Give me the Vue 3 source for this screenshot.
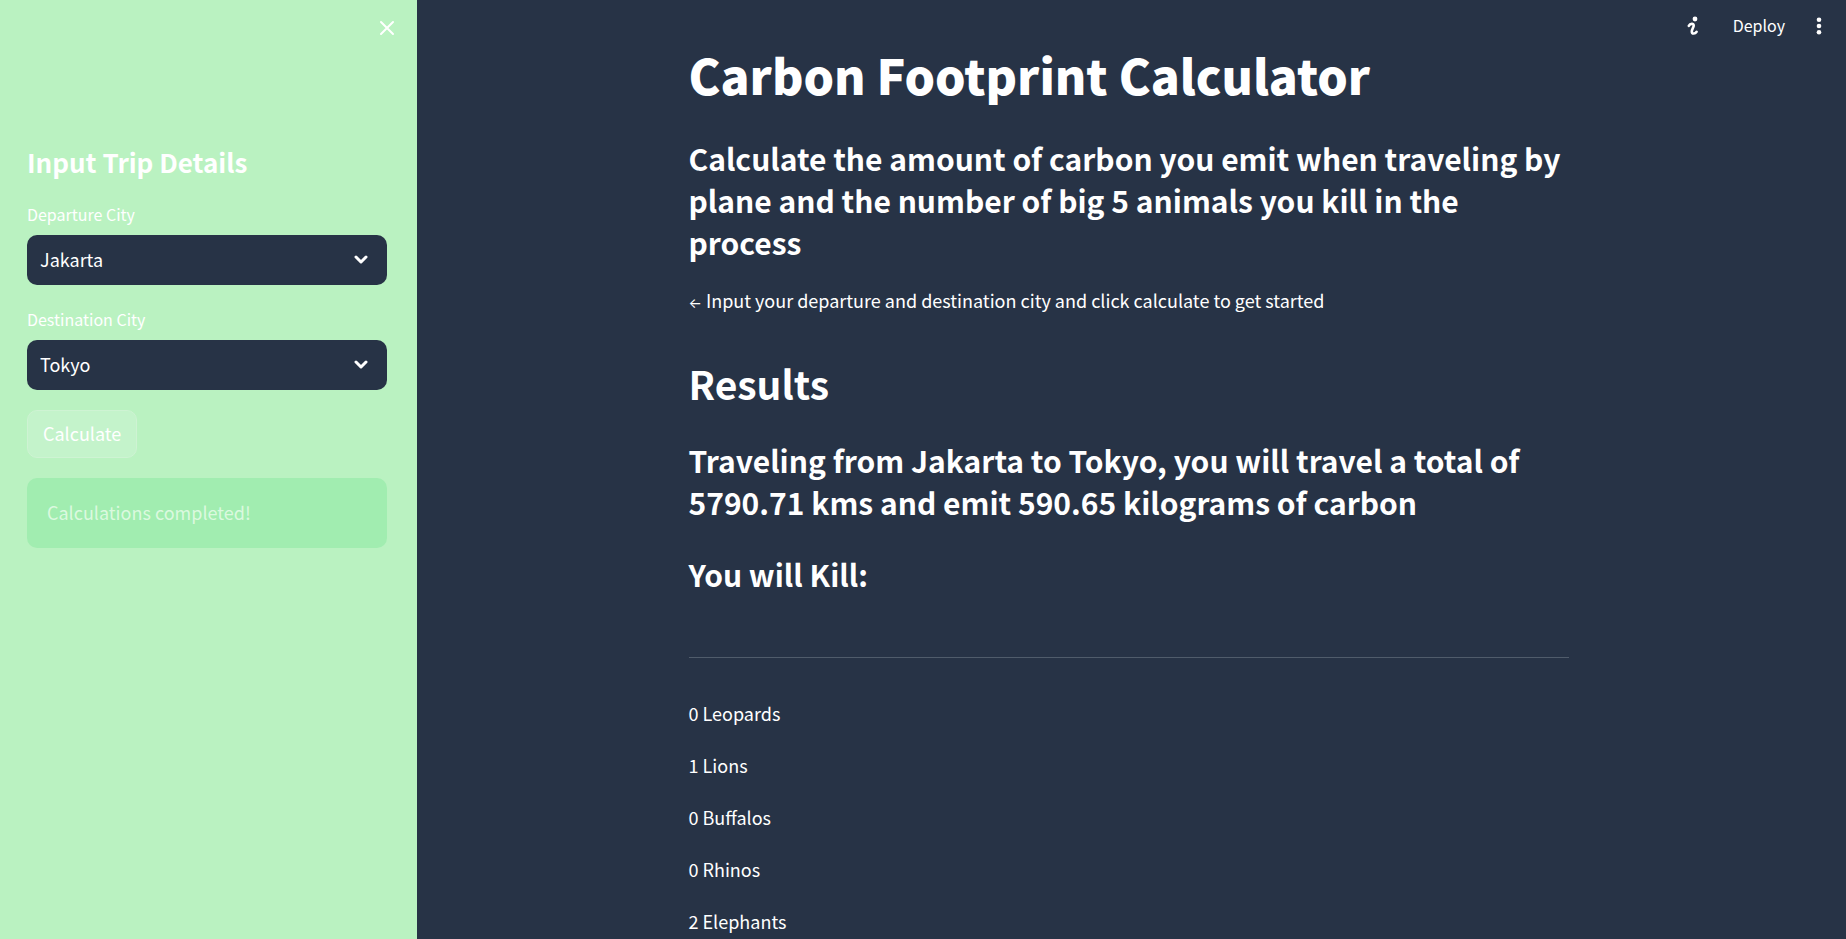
<script setup>
import { ref } from 'vue'

const cities = ['Jakarta', 'Tokyo', 'Singapore', 'London']
const departure = ref('Jakarta')
const destination = ref('Tokyo')
const animals = [
  { name: 'Leopards', count: 0 },
  { name: 'Lions', count: 1 },
  { name: 'Buffalos', count: 0 },
  { name: 'Rhinos', count: 0 },
  { name: 'Elephants', count: 2 },
]
</script>

<template>
  <div class="app">
    <aside class="sidebar">
      <div class="sidebar-top">
        <button class="icon-btn" type="button" aria-label="Close sidebar">
          <svg width="20" height="20" viewBox="0 0 20 20" fill="none" stroke="currentColor" stroke-width="2" stroke-linecap="round">
            <path d="M4 4 L16 16 M16 4 L4 16" />
          </svg>
        </button>
      </div>
      <h2 class="side-title">Input Trip Details</h2>
      <form class="form" @submit.prevent>
        <div class="field">
          <label for="departure">Departure City</label>
          <div class="select-wrap">
            <select id="departure" v-model="departure">
              <option v-for="c in cities" :key="c">{{ c }}</option>
            </select>
            <svg class="chevron" width="14" height="10" viewBox="0 0 14 10" fill="none" stroke="currentColor" stroke-width="3" stroke-linecap="round" stroke-linejoin="round">
              <path d="M2 2 L7 7 L12 2" />
            </svg>
          </div>
        </div>
        <div class="field">
          <label for="destination">Destination City</label>
          <div class="select-wrap">
            <select id="destination" v-model="destination">
              <option v-for="c in cities" :key="c">{{ c }}</option>
            </select>
            <svg class="chevron" width="14" height="10" viewBox="0 0 14 10" fill="none" stroke="currentColor" stroke-width="3" stroke-linecap="round" stroke-linejoin="round">
              <path d="M2 2 L7 7 L12 2" />
            </svg>
          </div>
        </div>
        <button class="calc" type="submit">Calculate</button>
        <div class="alert" role="alert">Calculations completed!</div>
      </form>
    </aside>

    <div class="main">
      <header class="toolbar">
        <button class="icon-btn" type="button" aria-label="Information">
          <svg width="12" height="20" viewBox="0 0 12 20" fill="none" stroke="currentColor" stroke-width="2.6" stroke-linecap="round">
            <circle cx="8" cy="3" r="2.4" fill="currentColor" stroke="none" />
            <path d="M1.8 9.8 C3 7.4 7 7 6.7 9.8 C6.4 11.8 4.8 13.4 4.8 15.4 C4.8 18.2 8 18.2 9.6 15.8" />
          </svg>
        </button>
        <button class="deploy" type="button">Deploy</button>
        <button class="icon-btn" type="button" aria-label="Main menu">
          <svg width="20" height="20" viewBox="0 0 20 20" fill="currentColor">
            <circle cx="10" cy="3.8" r="2.3" />
            <circle cx="10" cy="10" r="2.3" />
            <circle cx="10" cy="16.2" r="2.3" />
          </svg>
        </button>
      </header>
      <main class="content">
        <h1>Carbon Footprint Calculator</h1>
        <h3 class="intro">Calculate the amount of carbon you emit when traveling by plane and the number of big 5 animals you kill in the process</h3>
        <p class="hint"><span class="arrow">←</span> Input your departure and destination city and click calculate to get started</p>
        <h2>Results</h2>
        <h3 class="summary">Traveling from {{ departure }} to {{ destination }}, you will travel a total of 5790.71 kms and emit 590.65 kilograms of carbon</h3>
        <h3 class="kill">You will Kill:</h3>
        <hr />
        <div class="animals">
          <p v-for="a in animals" :key="a.name">{{ a.count }} {{ a.name }}</p>
        </div>
      </main>
    </div>
  </div>
</template>

<style>
body {
  margin: 0;
  background: #273346;
}
</style>

<style scoped>
.app {
  display: flex;
  min-height: 100vh;
  color: #fff;
  background: #273346;
  font-family: "Noto Sans CJK SC", "Noto Sans", sans-serif;
  font-size: 18px;
  line-height: 32px;
}
h1, h2, h3, p {
  margin: 0;
}
button, select {
  font: inherit;
  color: inherit;
}
.icon-btn, .deploy {
  display: flex;
  align-items: center;
  padding: 0;
  border: 0;
  background: none;
}
.sidebar {
  flex: none;
  box-sizing: border-box;
  width: 417px;
  padding: 18px 30px 20px 27px;
  background: #baf2c1;
}
.sidebar-top {
  display: flex;
  justify-content: flex-end;
  margin-right: -10px;
  margin-bottom: 106px;
}
.side-title {
  font-size: 26px;
  font-weight: 700;
  line-height: 36px;
}
.form {
  display: flex;
  flex-direction: column;
  gap: 20px;
  margin-top: 20px;
}
.field label {
  display: block;
  margin-bottom: 6px;
  font-size: 16px;
  line-height: 29px;
}
.select-wrap {
  position: relative;
}
select {
  display: block;
  box-sizing: border-box;
  width: 100%;
  height: 50px;
  padding: 0 40px 2px 13px;
  border: 0;
  border-radius: 10px;
  appearance: none;
  background: #273346;
}
.chevron {
  position: absolute;
  top: 20px;
  right: 19px;
  pointer-events: none;
}
.calc {
  align-self: flex-start;
  padding: 6px 15px 8px;
  border: 1px solid #cef3d3;
  border-radius: 10px;
  background: #c4f3cb;
}
.alert {
  padding: 18px 20px 20px;
  border-radius: 10px;
  background: #a1edb0;
  color: #dbf9df;
}
.main {
  position: relative;
  flex: 1;
  min-width: 0;
}
.toolbar {
  position: absolute;
  top: 9px;
  right: 17px;
  display: flex;
  align-items: center;
  font-size: 16px;
}
.deploy {
  margin: 0 24px 0 34px;
  padding-bottom: 2px;
}
.content {
  box-sizing: border-box;
  max-width: 920px;
  margin: 0 auto;
  padding: 41px 23px 0 17px;
}
h1 {
  font-size: 48px;
  font-weight: 900;
  line-height: 66px;
}
h2 {
  font-size: 39px;
  font-weight: 700;
  line-height: 54px;
}
h3 {
  font-size: 30px;
  font-weight: 700;
  line-height: 42px;
}
.intro {
  margin-top: 30px;
}
.hint {
  margin-top: 21px;
  margin-bottom: 40px;
}
.arrow {
  font-family: Inter, sans-serif;
  font-size: 14px;
  line-height: 16px;
}
.summary {
  margin-top: 29px;
}
.kill {
  margin-top: 30px;
}
hr {
  margin: 62px 0 39px;
  border: 0;
  border-top: 1px solid #505c6b;
}
.animals {
  display: flex;
  flex-direction: column;
  gap: 20px;
}
</style>
